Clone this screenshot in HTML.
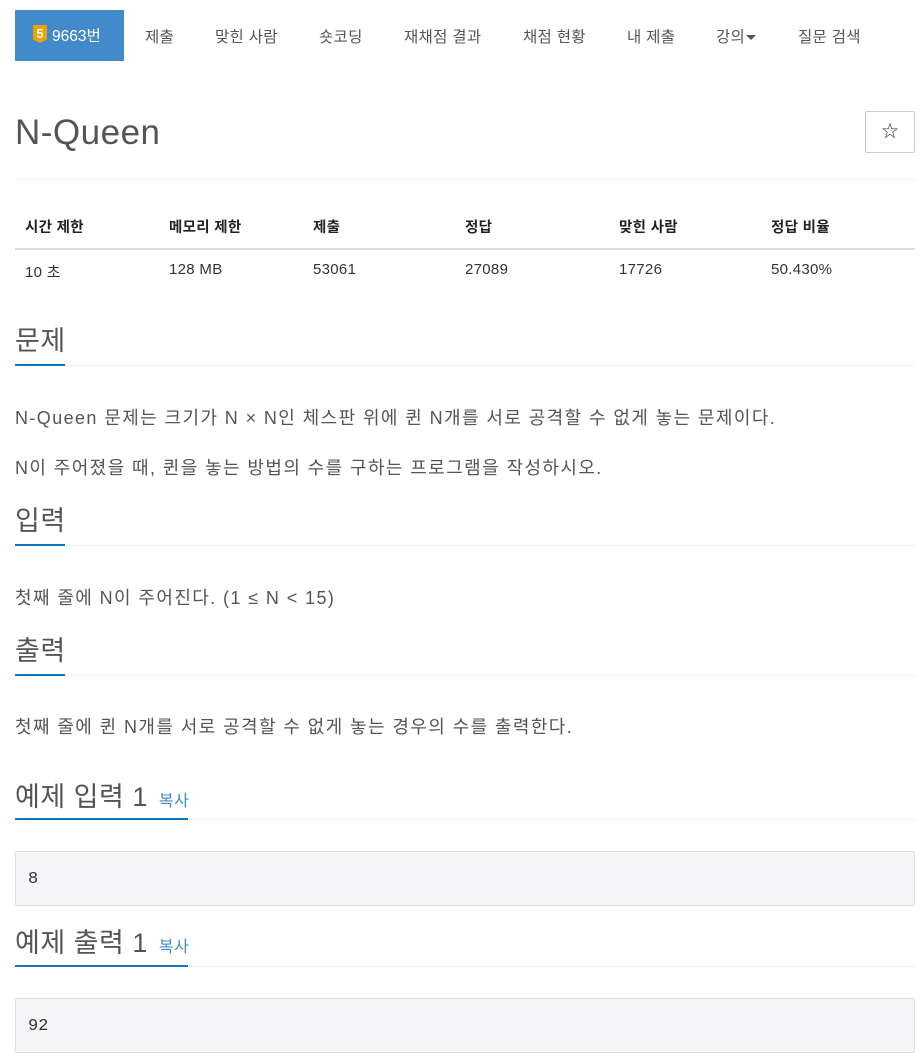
<!DOCTYPE html>
<html><head><meta charset="utf-8"><style>
*{margin:0;padding:0;box-sizing:border-box}
body{width:920px;height:1058px;background:#fff;font-family:"Liberation Sans","Noto Sans CJK KR",sans-serif;color:#333;position:relative;overflow:hidden}
.a{position:absolute;white-space:nowrap}
.nav{font-size:15.5px;color:#555;top:25px;letter-spacing:0.3px}
.act{left:15px;top:10px;width:109px;height:51px;background:#428bca;color:#fff;font-size:15.5px}
.th{font-size:14.5px;font-weight:bold;color:#222;top:216px;letter-spacing:0.3px}
.td{font-size:15px;color:#333;top:261px;letter-spacing:0.3px}
.h{font-size:27px;color:#555;letter-spacing:0.5px}
.ul{position:absolute;height:2px;background:#0f75bc}
.dl{position:absolute;left:15px;width:899px;border-top:1px dotted #ddd}
.p{font-size:18px;color:#555;letter-spacing:1.4px}
.pre{position:absolute;left:15px;width:900px;height:55px;background:#f5f5f7;border:1px solid #ddd;border-radius:2px;font-family:"Liberation Mono",monospace;font-size:17px;color:#333;padding:18px 12px}
.cp{font-size:16px;color:#428bca;margin-left:3px}
</style></head><body>
<div class="a act"><span style="position:absolute;left:18px;top:15px;width:14px;height:18px;background:#f0a000;color:#fff;font-size:13px;font-weight:bold;text-align:center;line-height:17px;clip-path:polygon(0 0,100% 0,100% 80%,50% 100%,0 80%)">5</span><span style="position:absolute;left:37px;top:14px">9663번</span></div>
<div class="a nav" style="left:145px">제출</div>
<div class="a nav" style="left:215px">맞힌 사람</div>
<div class="a nav" style="left:319px">숏코딩</div>
<div class="a nav" style="left:404px">재채점 결과</div>
<div class="a nav" style="left:523px">채점 현황</div>
<div class="a nav" style="left:627px">내 제출</div>
<div class="a nav" style="left:716px">강의<span style="display:inline-block;border-left:5px solid transparent;border-right:5px solid transparent;border-top:5px solid #555;vertical-align:middle;margin-left:1px"></span></div>
<div class="a nav" style="left:798px">질문 검색</div>
<div class="a" style="left:15px;top:113px;font-size:35px;color:#555;letter-spacing:0.5px">N-Queen</div>
<div class="a" style="left:865px;top:111px;width:50px;height:42px;border:1px solid #ccc;border-radius:2px;text-align:center;line-height:40px;font-size:17px;color:#333">☆</div>
<div class="a" style="left:15px;top:179px;width:900px;border-top:1px solid #eee"></div>
<div class="a th" style="left:25px">시간 제한</div>
<div class="a th" style="left:169px">메모리 제한</div>
<div class="a th" style="left:313px">제출</div>
<div class="a th" style="left:465px">정답</div>
<div class="a th" style="left:619px">맞힌 사람</div>
<div class="a th" style="left:771px">정답 비율</div>
<div class="a" style="left:15px;top:248px;width:900px;border-top:2px solid #ddd"></div>
<div class="a td" style="left:25px">10 초</div>
<div class="a td" style="left:169px">128 MB</div>
<div class="a td" style="left:313px">53061</div>
<div class="a td" style="left:465px">27089</div>
<div class="a td" style="left:619px">17726</div>
<div class="a td" style="left:771px">50.430%</div>

<div class="a h" style="left:15px;top:319px">문제</div>
<div class="dl" style="top:365px"></div><div class="ul" style="left:15px;top:364px;width:50px"></div>
<div class="a p" style="left:15px;top:404px">N-Queen 문제는 크기가 N × N인 체스판 위에 퀸 N개를 서로 공격할 수 없게 놓는 문제이다.</div>
<div class="a p" style="left:15px;top:454px">N이 주어졌을 때, 퀸을 놓는 방법의 수를 구하는 프로그램을 작성하시오.</div>

<div class="a h" style="left:15px;top:499px">입력</div>
<div class="dl" style="top:545px"></div><div class="ul" style="left:15px;top:544px;width:50px"></div>
<div class="a p" style="left:15px;top:584px">첫째 줄에 N이 주어진다. (1 ≤ N &lt; 15)</div>

<div class="a h" style="left:15px;top:629px">출력</div>
<div class="dl" style="top:675px"></div><div class="ul" style="left:15px;top:674px;width:50px"></div>
<div class="a p" style="left:15px;top:713px">첫째 줄에 퀸 N개를 서로 공격할 수 없게 놓는 경우의 수를 출력한다.</div>

<div class="a h" style="left:15px;top:775px">예제 입력 1 <span class="cp">복사</span></div>
<div class="dl" style="top:819px"></div><div class="ul" style="left:15px;top:818px;width:173px"></div>
<div class="pre" style="top:851px">8</div>

<div class="a h" style="left:15px;top:921px">예제 출력 1 <span class="cp">복사</span></div>
<div class="dl" style="top:966px"></div><div class="ul" style="left:15px;top:965px;width:173px"></div>
<div class="pre" style="top:998px">92</div>
</body></html>
